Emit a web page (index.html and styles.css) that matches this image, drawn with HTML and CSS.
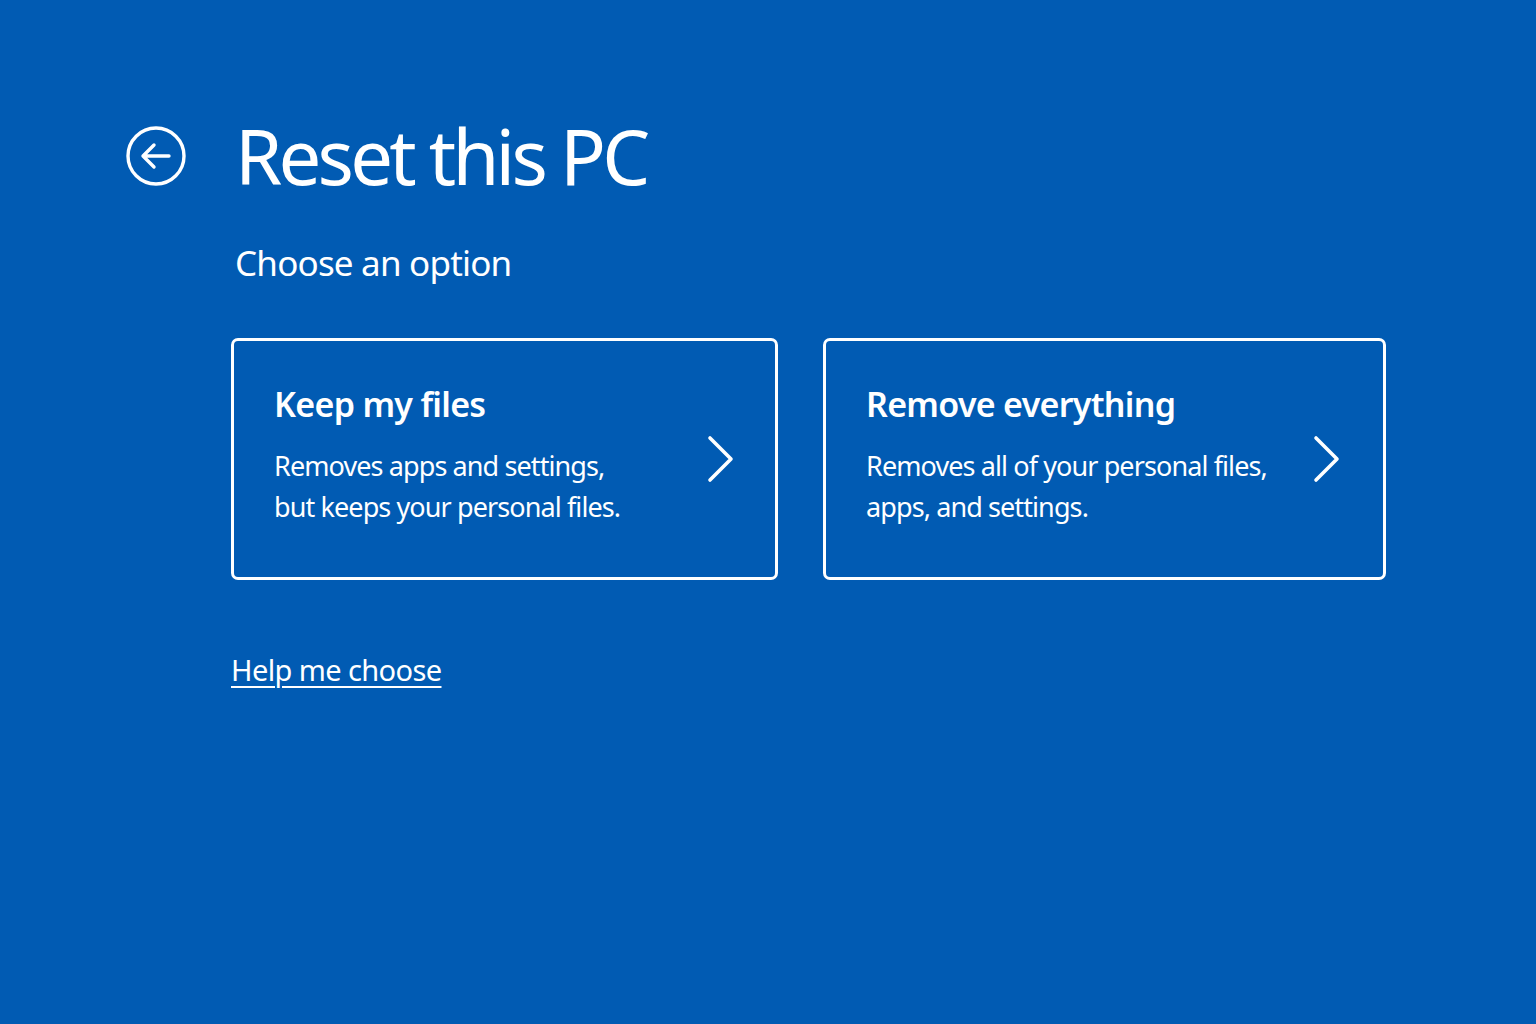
FILE: index.html
```html
<!DOCTYPE html>
<html lang="en">
<head>
<meta charset="utf-8">
<title>Reset this PC</title>
<link rel="stylesheet" href="styles.css">
</head>
<body>
<main class="page">
  <header class="header">
    <button class="back" aria-label="Back">
      <svg width="62" height="62" viewBox="0 0 62 62" fill="none" stroke="#fff" stroke-width="3.4" stroke-linecap="round" stroke-linejoin="round">
        <circle cx="31" cy="31" r="28"/>
        <path d="M44 31H18M29 20L18 31L29 42"/>
      </svg>
    </button>
    <h1 class="title">Reset this PC</h1>
  </header>
  <section class="content">
    <h2 class="subtitle">Choose an option</h2>
    <div class="options">
      <a class="card card-keep" href="#">
        <div class="card-text">
          <h3 class="card-title">Keep my files</h3>
          <p class="card-desc">Removes apps and settings,<br>but keeps your personal files.</p>
        </div>
        <svg class="chev" width="30" height="48" viewBox="0 0 30 48" fill="none" stroke="#fff" stroke-width="3.6" stroke-linecap="round" stroke-linejoin="round"><path d="M4 3L25 24L4 45"/></svg>
      </a>
      <a class="card card-remove" href="#">
        <div class="card-text">
          <h3 class="card-title">Remove everything</h3>
          <p class="card-desc">Removes all of your personal files,<br>apps, and settings.</p>
        </div>
        <svg class="chev" width="30" height="48" viewBox="0 0 30 48" fill="none" stroke="#fff" stroke-width="3.6" stroke-linecap="round" stroke-linejoin="round"><path d="M4 3L25 24L4 45"/></svg>
      </a>
    </div>
    <a class="help" href="#">Help me choose</a>
  </section>
</main>
</body>
</html>
```
FILE: styles.css
```css
html, body {
  margin: 0;
  height: 100%;
}
body {
  background: #015bb3;
  color: #fff;
  font-family: "Noto Sans", "Open Sans", sans-serif;
  overflow: hidden;
}
.page {
  padding: 100px 0 0 125px;
}
.header {
  display: flex;
  align-items: center;
  gap: 48px;
}
.back {
  background: none;
  border: 0;
  padding: 0;
  width: 62px;
  height: 62px;
  display: flex;
}
.title {
  margin: 0;
  font-size: 76px;
  font-weight: 400;
  line-height: 112px;
  letter-spacing: -3.8px;
}
.content {
  padding-left: 106px;
}
.subtitle {
  margin: 27px 0 0 4px;
  font-size: 35px;
  font-weight: 400;
  line-height: 48px;
  letter-spacing: -0.8px;
}
.options {
  display: flex;
  gap: 45px;
  margin-top: 51px;
}
.card {
  box-sizing: border-box;
  height: 242px;
  border: 3px solid #fff;
  border-radius: 7px;
  display: flex;
  align-items: center;
  justify-content: space-between;
  color: #fff;
  text-decoration: none;
  padding: 0 39px 0 40px;
}
.card-keep { width: 547px; }
.card-remove { width: 563px; padding-right: 41px; }
.card-text {
  padding-bottom: 10px;
}
.card-title {
  margin: 0;
  font-size: 34px;
  font-weight: 600;
  line-height: 46px;
  letter-spacing: -0.7px;
}
.card-desc {
  margin: 18px 0 0;
  font-size: 27px;
  line-height: 41px;
  letter-spacing: -0.9px;
}
.chev {
  margin-bottom: 0;
}
.help {
  display: inline-block;
  margin-top: 70px;
  color: #fff;
  font-size: 29px;
  line-height: 40px;
  text-decoration: underline;
  text-underline-offset: 5px;
  text-decoration-thickness: 2px;
  letter-spacing: -0.6px;
}
```
